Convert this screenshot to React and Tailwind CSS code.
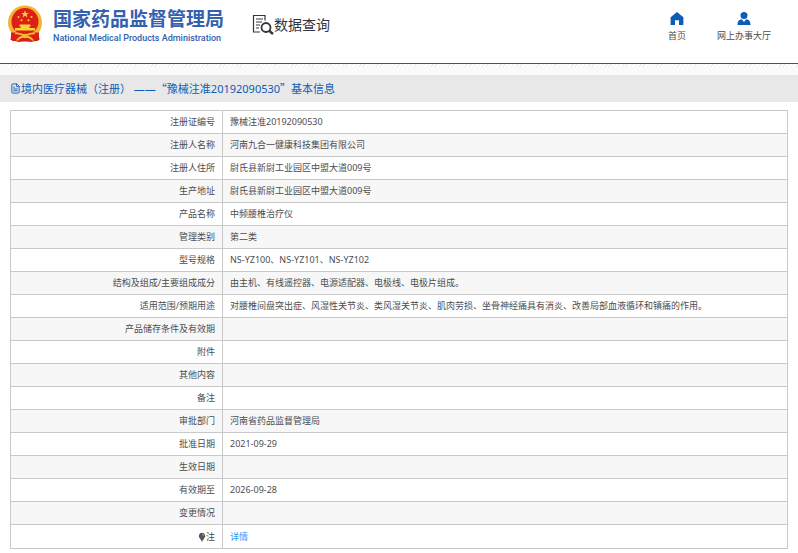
import { FileText } from 'lucide-react';

const ROWS = [
  { label: '注册证编号', value: '豫械注准20192090530' },
  { label: '注册人名称', value: '河南九合一健康科技集团有限公司' },
  { label: '注册人住所', value: '尉氏县新尉工业园区中盟大道009号' },
  { label: '生产地址', value: '尉氏县新尉工业园区中盟大道009号' },
  { label: '产品名称', value: '中频腰椎治疗仪' },
  { label: '管理类别', value: '第二类' },
  { label: '型号规格', value: 'NS-YZ100、NS-YZ101、NS-YZ102' },
  { label: '结构及组成/主要组成成分', value: '由主机、有线遥控器、电源适配器、电极线、电极片组成。' },
  {
    label: '适用范围/预期用途',
    value: '对腰椎间盘突出症、风湿性关节炎、类风湿关节炎、肌肉劳损、坐骨神经痛具有消炎、改善局部血液循环和镇痛的作用。',
  },
  { label: '产品储存条件及有效期', value: '' },
  { label: '附件', value: '' },
  { label: '其他内容', value: '' },
  { label: '备注', value: '' },
  { label: '审批部门', value: '河南省药品监督管理局' },
  { label: '批准日期', value: '2021-09-29' },
  { label: '生效日期', value: '' },
  { label: '有效期至', value: '2026-09-28' },
  { label: '变更情况', value: '' },
];

function Emblem() {
  return (
    <svg viewBox="0 0 36 38" className="h-[38px] w-9 shrink-0" aria-hidden="true">
      <path d="M5 23 3.500 35 8 35.500 11 37 18 36 25 37 28 35.500 32.500 35 31 23z" fill="#d81e16" />
      <circle cx="18" cy="17.500" r="17" fill="#f3b52f" />
      <circle cx="18" cy="16.500" r="13.500" fill="#dc2017" />
      <path d="m18 5.200 1 2.700h2.900l-2.300 1.700.8 2.800-2.400-1.700-2.400 1.700.8-2.800-2.300-1.700H17z" fill="#fbd23c" />
      <g fill="#fbd23c">
        <circle cx="11.500" cy="12" r="1" />
        <circle cx="24.500" cy="12" r="1" />
        <circle cx="14.500" cy="15.200" r="1" />
        <circle cx="21.500" cy="15.200" r="1" />
        <path d="M13 19.500h10l1 1.800h-1.500V23H28v2.500H8V23h5.500v-1.700H12z" />
      </g>
      <path d="M4 27.500h28L31 36l-13 .5L5 36z" fill="#d81e16" />
      <path d="M8 28.500c4-1 6 1.500 10 1.500s6-2.500 10-1.500M10 35.500c2-3 5-4 8-4s6 1 8 4" fill="none" stroke="#f6bd35" strokeWidth="1.800" />
      <circle cx="18" cy="31" r="2.200" fill="#f6bd35" />
    </svg>
  );
}

function SearchDocIcon() {
  return (
    <svg viewBox="0 0 22 21" className="h-[21px] w-[22px] shrink-0" fill="none" stroke="#34343f" aria-hidden="true">
      <path d="M8 18H1.500V1.500h11.500v5" strokeWidth="1.200" />
      <path d="M4 5h7M4 8h6M4 11h4M4 14h3" strokeWidth="1" />
      <circle cx="14" cy="13.500" r="4.500" strokeWidth="1.800" />
      <path d="m17.500 17 3.500 3" strokeWidth="2.400" />
    </svg>
  );
}

function HomeIcon() {
  return (
    <svg viewBox="0 0 14 13" className="h-[13px] w-3.5" fill="#0d5cb8" aria-hidden="true">
      <path d="M7 0 .6 5.300V13H5V8.300h4V13h4.400V5.300z" />
    </svg>
  );
}

function UserIcon() {
  return (
    <svg viewBox="0 0 14 13" className="h-[13px] w-3.5" fill="#0d5cb8" aria-hidden="true">
      <circle cx="7" cy="3.500" r="3.500" />
      <path d="M.5 13c0-4 1.600-5.500 4.200-5.800L7 10l2.300-2.800c2.600.3 4.200 1.800 4.200 5.800z" />
    </svg>
  );
}

function BulbIcon() {
  return (
    <svg viewBox="0 0 8 10" className="h-[10px] w-2" aria-hidden="true">
      <path d="M4 .8a3.200 3.200 0 0 0-2 5.700L2.800 8h2.400L6 6.500A3.200 3.200 0 0 0 4 .8z" fill="#55565a" />
      <path d="M3 8.800h2" stroke="#55565a" />
      <path d="M4.300 2.200c.8.200 1.200.8 1.300 1.500" fill="none" stroke="#ddd" strokeWidth=".8" />
    </svg>
  );
}

export default function App() {
  return (
    <div className="bg-white font-['Noto_Sans','Noto_Sans_CJK_SC',sans-serif] text-[9px] text-[#4c4d50]">
      <header className="flex h-16 items-start justify-between border-b border-[#17619b] pr-[27px] pl-[7px]">
        <div className="flex items-start">
          <div className="flex pt-[5px]">
            <Emblem />
            <div className="ml-2.5 pt-1 text-[#3560ae]">
              <h1 className="text-[19px] leading-5 font-bold whitespace-nowrap">国家药品监督管理局</h1>
              <p className="pt-0.5 font-['Roboto',sans-serif] text-[9px] leading-[14px] font-medium whitespace-nowrap">
                National Medical Products Administration
              </p>
            </div>
          </div>
          <div className="ml-7 flex items-center pt-3.5">
            <SearchDocIcon />
            <span className="text-[14px] leading-5 whitespace-nowrap text-[#34343f]">数据查询</span>
          </div>
        </div>
        <nav className="flex gap-[31px] pt-3">
          <a href="#" className="flex flex-col items-center gap-1">
            <HomeIcon />
            <span className="leading-[14px]">首页</span>
          </a>
          <a href="#" className="flex flex-col items-center gap-1">
            <UserIcon />
            <span className="leading-[14px]">网上办事大厅</span>
          </a>
        </nav>
      </header>

      <div className="h-[11px] bg-[#fafafa]">
        <div className="h-[3px] bg-[repeating-linear-gradient(135deg,#eeeeee_0px,#eeeeee_1px,#ffffff_1px,#ffffff_3px)]" />
      </div>
      <h2 className="flex h-[27px] items-center bg-[#e8e8e8] pl-2.5 text-[11px] text-[#0d5cb8]">
        <FileText className="h-[11px] w-[11px]" strokeWidth={2} />
        <span>
          境内医疗器械（注册） ——<span className="font-['Noto_Sans_CJK_SC',sans-serif]">“</span>
          豫械注准20192090530<span className="font-['Noto_Sans_CJK_SC',sans-serif]">”</span>基本信息
        </span>
      </h2>

      <main className="px-2.5 pt-2 pb-1">
        <table className="w-full border-collapse border border-[#c9c9c9]">
          <tbody>
            {ROWS.map((row) => (
              <tr key={row.label} className="h-[23px] border-b border-[#c9c9c9] even:bg-[#f7f7f7]">
                <th scope="row" className="w-[212px] border-r border-[#c9c9c9] pr-[7px] text-right leading-4 font-normal">
                  {row.label}
                </th>
                <td className="pl-[7px] leading-4">{row.value}</td>
              </tr>
            ))}
            <tr className="h-6">
              <th scope="row" className="border-r border-[#c9c9c9] pr-[7px] leading-4 font-normal">
                <span className="flex items-center justify-end">
                  <BulbIcon />注
                </span>
              </th>
              <td className="pl-[7px] leading-4">
                <a href="#" className="text-[#3296fa]">详情</a>
              </td>
            </tr>
          </tbody>
        </table>
      </main>
    </div>
  );
}
